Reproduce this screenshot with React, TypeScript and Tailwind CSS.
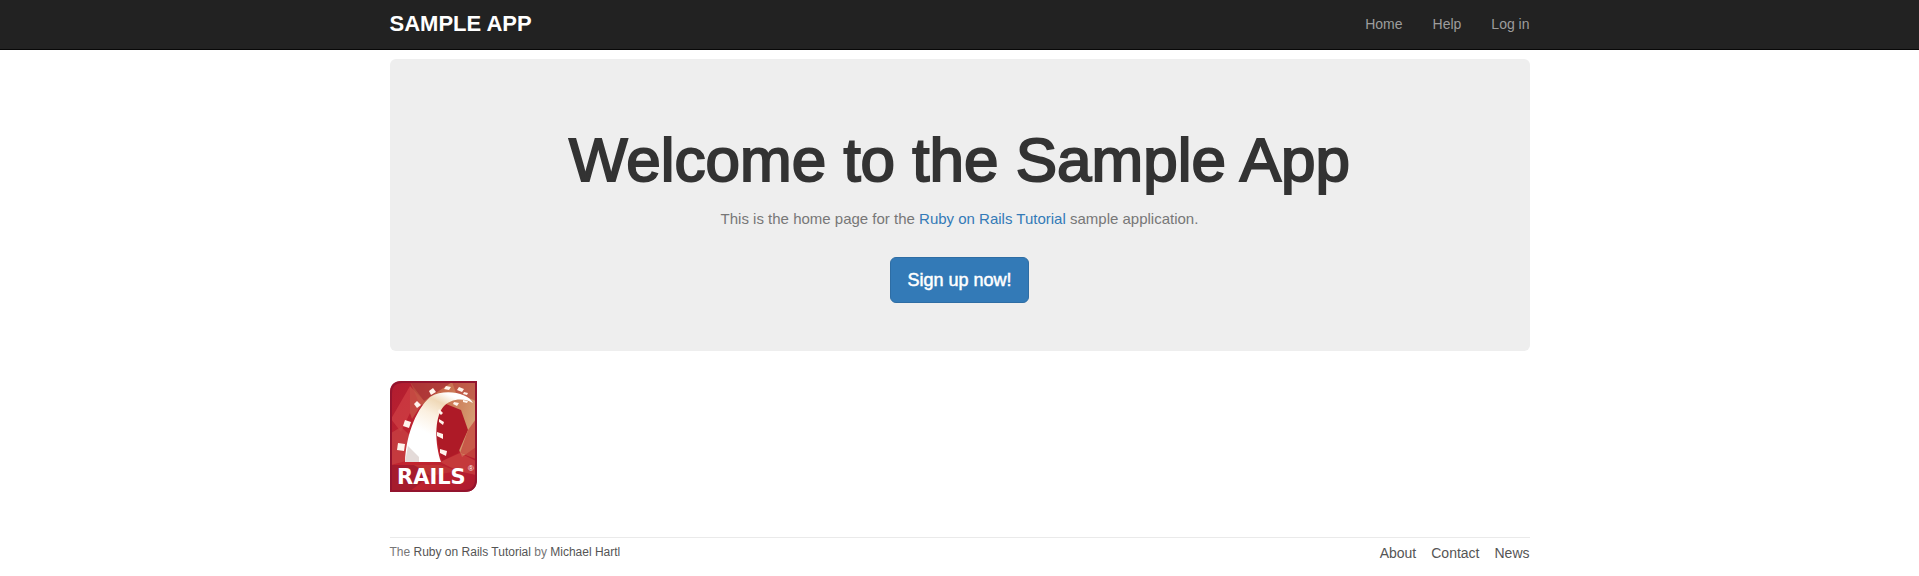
const ties = [
  "56,5 61,6 59,9 54,8", "39,10 43,7 46,11 41,14", "27,20 31,24 27,27 24,23",
  "15,39 21,41 19,47 13,45", "8,62 15,63 14,70 7,69", "69,6 74,8 72,11 67,9",
  "74,11 78,12 77,14 73,13", "73,19 78,20 77,22 73,21", "64,21 69,22 67,25 63,23",
  "49,28 53,32 51,34 48,31", "49,38 54,41 53,44 49,41",
  "47,51 53,53 53,58 47,55", "50,68 57,70 56,75 50,72",
];

function RailsLogo() {
  return (
    <svg role="img" aria-label="Rails" viewBox="0 0 87 111" className="block w-[87px] h-[111px]">
      <defs>
        <linearGradient id="base" x1="0" y1="0" x2="1" y2="1">
          <stop offset="0" stopColor="#b01c30" />
          <stop offset="0.5" stopColor="#c3252f" />
          <stop offset="1" stopColor="#ad1a2f" />
        </linearGradient>
        <linearGradient id="glow" x1="0" y1="0.2" x2="1" y2="0.5">
          <stop offset="0" stopColor="#b8453b" />
          <stop offset="0.5" stopColor="#c9714f" />
          <stop offset="1" stopColor="#d6a075" />
        </linearGradient>
        <linearGradient id="track" gradientUnits="userSpaceOnUse" x1="56" y1="12" x2="32" y2="62">
          <stop offset="0" stopColor="#fff" />
          <stop offset="0.2" stopColor="#f0d9b8" />
          <stop offset="0.45" stopColor="#fbf0e0" />
          <stop offset="0.8" stopColor="#fff" />
        </linearGradient>
        <clipPath id="card">
          <path d="M12 0H87V98Q87 111 74 111H0V12Q0 0 12 0Z" />
        </clipPath>
      </defs>
      <g clipPath="url(#card)">
        <rect width="87" height="111" fill="url(#base)" />
        <path d="M20 1H86V66L72 76L50 22L30 24Z" fill="url(#glow)" />
        <path d="M20 1H62L34 20Z" fill="#a92f34" opacity="0.75" />
        <path d="M62 1H86V20L66 12Z" fill="#b54038" opacity="0.6" />
        <path d="M1 38L20 5L20 32L11 51Z" fill="#cf3f44" opacity="0.75" />
        <path d="M20 5L34 20L22 38L20 32Z" fill="#c85246" opacity="0.8" />
        <path d="M1 52L11 46L24 58L16 80L1 84Z" fill="#c84544" opacity="0.7" />
        <path d="M56 23L71 29L78 49L68 72L52 80L46 54L48 32Z" fill="#ae1a27" />
        <path d="M78 49L86 38V78L70 72Z" fill="#c4483f" opacity="0.8" />
        <path d="M1 84L24 84L44 92L20 110H1Z" fill="#8e162c" opacity="0.55" />
        <path d="M50 81L70 72L86 80V94L68 90Z" fill="#cb4440" opacity="0.7" />
        <path d="M24 84H50L68 90L40 95Z" fill="#bf3b36" opacity="0.7" />
      </g>
      <path d="M15 81C16 57 24 31 40 16C55 7 78 12 83 22C73 16 60 18 53 26C44 38 45 63 51 81Z" fill="url(#track)" />
      <path d="M15 81L18 65L29 76V81Z" fill="#c9b7b4" opacity="0.5" />
      {ties.map((points) => <polygon key={points} points={points} fill="#fff4ec" />)}
      <path d="M12 1H86V98Q86 110 74 110H1V12Q1 1 12 1Z" fill="none" stroke="#93142e" strokeWidth="2" />
      <text x="7" y="103" fontSize="21" fontWeight="700" fill="#fff" className="font-['DejaVu_Sans',sans-serif]">RAILS</text>
      <text x="78" y="90" fontSize="8" fill="#fff" className="font-['Liberation_Sans',sans-serif]">®</text>
    </svg>
  );
}

export default function App() {
  return (
    <div className="bg-white font-['Liberation_Sans',Arial,sans-serif] text-sm leading-5 text-[#333]">
      <header className="border-b border-[#080808] bg-[#222]">
        <div className="mx-auto flex h-[49px] max-w-[1140px] items-center justify-between pb-0.5">
          <a href="#" className="text-[22px] font-bold text-white">SAMPLE APP</a>
          <nav className="flex gap-[30px] text-[#9d9d9d]">
            <a href="#">Home</a>
            <a href="#">Help</a>
            <a href="#">Log in</a>
          </nav>
        </div>
      </header>
      <div className="mx-auto max-w-[1140px] pt-[9px]">
        <main>
          <section className="flex flex-col items-center rounded-md bg-[#eee] px-[60px] pt-[67px] pb-12 text-center">
            <h1 className="text-[62px] leading-[68px] [-webkit-text-stroke:2px_#333]">Welcome to the Sample App</h1>
            <h2 className="mt-[13px] text-[15px] leading-6 text-[#777]">
              This is the home page for the <a href="#" className="text-[#337ab7]">Ruby on Rails Tutorial</a> sample application.
            </h2>
            <a href="#" className="mt-[26px] rounded-md border border-[#2e6da4] bg-[#337ab7] px-4 py-2.5 text-lg leading-6 text-white [-webkit-text-stroke:0.5px_#fff]">Sign up now!</a>
          </section>
          <a href="#" className="mt-[30px] block w-fit"><RailsLogo /></a>
        </main>
        <footer className="mt-[45px] flex items-start justify-between border-t border-[#eaeaea] pt-[5px] text-[#777]">
          <small className="text-xs leading-[18px]">
            The <a href="#" className="text-[#555]">Ruby on Rails Tutorial</a> by <a href="#" className="text-[#555]">Michael Hartl</a>
          </small>
          <nav className="flex gap-[15px] text-[#555]">
            <a href="#">About</a>
            <a href="#">Contact</a>
            <a href="#">News</a>
          </nav>
        </footer>
      </div>
    </div>
  );
}
